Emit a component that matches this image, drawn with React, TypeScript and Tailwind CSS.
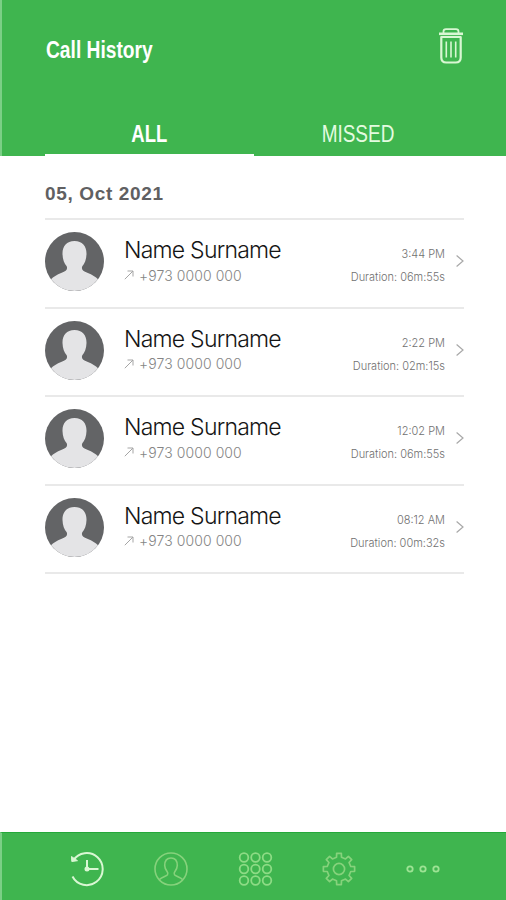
const calls = [
  { id: 1, name: "Name Surname", phone: "+973 0000 000", time: "3:44 PM", duration: "06m:55s" },
  { id: 2, name: "Name Surname", phone: "+973 0000 000", time: "2:22 PM", duration: "02m:15s" },
  { id: 3, name: "Name Surname", phone: "+973 0000 000", time: "12:02 PM", duration: "06m:55s" },
  { id: 4, name: "Name Surname", phone: "+973 0000 000", time: "08:12 AM", duration: "00m:32s" },
];

function TrashIcon() {
  return (
    <svg width="26" height="38" viewBox="0 0 26 38" fill="none" stroke="#d9f7d3">
      <path d="M5.500 6V4.600Q5.500 2.200 8 2.200h10q2.500 0 2.500 2.400V6" strokeWidth="1.800" />
      <path d="M1 6.800h24" strokeWidth="2.600" />
      <path d="M3.300 10h19.400v20.500q0 5-5 5H8.300q-5 0-5-5z" strokeWidth="2.200" strokeLinejoin="round" />
      <path d="M8.300 14.500v16M13 14.500v16M17.700 14.500v16" strokeWidth="1.600" />
    </svg>
  );
}

function Avatar() {
  return (
    <svg width="59" height="60" viewBox="0 0 59 60" className="shrink-0">
      <circle cx="29.5" cy="29.5" r="29.5" fill="#636466" />
      <path
        d="M29.500 9C21.500 9 17.300 14.500 17.500 22c.1 5.500 1.800 9.500 4.200 12.200 1.300 3.300-.7 4.800-5 6.600C11.500 43 8.300 45 6 47.300a29.500 29.500 0 0 0 47 0c-2.300-2.300-5.500-4.300-10.700-6.500-4.300-1.800-6.300-3.300-5-6.600C39.700 31.500 41.400 27.500 41.500 22 41.700 14.500 37.500 9 29.500 9z"
        fill="#e4e4e6"
      />
    </svg>
  );
}

function HistoryIcon() {
  return (
    <svg width="34" height="36" viewBox="0 0 34 36" fill="none" stroke="#d9f7d3">
      <path d="M3.200 9.500A16 16 0 1 1 2.500 25.500" strokeWidth="2" />
      <path d="M1.500 5.500l.3 5 5.700-.8z" fill="#d9f7d3" strokeWidth="1" />
      <path d="M17 9v9h11.500" strokeWidth="2" />
      <circle cx="17" cy="18" r="1.500" strokeWidth="2" />
    </svg>
  );
}

function ContactIcon() {
  return (
    <svg width="34" height="36" viewBox="0 0 34 36" fill="none" stroke="#86d27c" strokeWidth="1.600">
      <circle cx="17" cy="18" r="16" />
      <path d="M5.500 28.500c2.500-2.500 6.500-3 8-4.800.7-.9.5-1.800-.3-2.900-1.300-1.700-2.500-3.700-2.500-6.200C10.700 9.600 13.300 7 17 7s6.300 2.600 6.300 7.600c0 2.500-1.200 4.500-2.500 6.200-.8 1.100-1 2-.3 2.900 1.500 1.800 5.500 2.300 8 4.800" />
    </svg>
  );
}

function DialpadIcon() {
  const spots = [6, 17.500, 29];
  return (
    <svg width="35" height="36" viewBox="0 0 35 36" fill="none" stroke="#8ddb85" strokeWidth="1.800">
      {spots.map((y) => spots.map((x) => <circle key={`${x}-${y}`} cx={x} cy={y + 0.5} r="4.300" />))}
    </svg>
  );
}

// outline of a gear with eight teeth around (18, 18)
const gearPoints = Array.from({ length: 8 }, (_, i) =>
  [
    [-12, 12],
    [-8.5, 15.800],
    [8.5, 15.800],
    [12, 12],
  ].map(([deg, r]) => {
    const a = ((i * 45 + deg - 90) * Math.PI) / 180;
    return `${(18 + r * Math.cos(a)).toFixed(2)},${(18 + r * Math.sin(a)).toFixed(2)}`;
  }).join(" ")
).join(" ");

function GearIcon() {
  return (
    <svg width="36" height="36" viewBox="0 0 36 36" fill="none" stroke="#86d27c" strokeWidth="1.700" strokeLinejoin="round">
      <polygon points={gearPoints} />
      <circle cx="18" cy="18" r="5.600" />
    </svg>
  );
}

function MoreIcon() {
  return (
    <svg width="36" height="36" viewBox="0 0 36 36" fill="none" stroke="#9de394" strokeWidth="1.800">
      <circle cx="5" cy="18" r="2.700" />
      <circle cx="18" cy="18" r="2.700" />
      <circle cx="31" cy="18" r="2.700" />
    </svg>
  );
}

function CallRow({ call }: any) {
  return (
    <div className="flex h-[88.6px] border-b-2 border-[#e9e9e9] pt-[12px]">
      <Avatar />
      <div className="ml-[20px] pt-[4px] font-['Inter','Liberation_Sans',sans-serif]">
        <div className="h-[28px] whitespace-nowrap text-[23px] leading-[28px] font-light tracking-[-0.77px] text-[#151515]">
          {call.name}
        </div>
        <div className="flex h-[22px] items-center text-[14px] font-light text-[#858585]">
          <svg width="10" height="10" viewBox="0 0 10 10" fill="none" stroke="#a5a5a5" className="mr-[5px]">
            <path d="M.8 9.200L9 1M3.500 1H9v5.500" />
          </svg>
          <span className="whitespace-nowrap tracking-[0.08px]">{call.phone}</span>
        </div>
      </div>
      <div className="ml-auto pt-[13px] text-right font-['Inter','Liberation_Sans',sans-serif] text-[11px] font-light text-[#707070]">
        <div className="h-[23px] leading-[19px]">{call.time}</div>
        <div className="whitespace-nowrap leading-[19px]">Duration: {call.duration}</div>
      </div>
      <svg width="8" height="14" viewBox="0 0 8 14" fill="none" stroke="#a8a8a8" strokeWidth="1.200" className="mt-[22px] ml-[11px] shrink-0">
        <path d="M.6 1.500L7 7 .6 12.500" />
      </svg>
    </div>
  );
}

export default function App() {
  return (
    <div className="flex h-[900px] w-[506px] flex-col overflow-hidden bg-white font-['Liberation_Sans',Arial,sans-serif]">
      <header className="flex h-[156px] flex-col border-l-2 border-[#7bcf86] bg-[#3fb54f] text-white">
        <div className="flex justify-between pt-[27px] pr-[42px] pl-[44px]">
          <h1 className="mt-[7px] origin-left scale-x-[0.8] text-[24px] leading-[32px] font-bold">Call History</h1>
          <TrashIcon />
        </div>
        <nav className="mt-auto ml-[43px] flex h-[44px] text-center text-[24px] leading-[43px]">
          <div className="w-[209px] border-b-2 border-white">
            <span className="inline-block scale-x-[0.77] font-bold">ALL</span>
          </div>
          <div className="w-[208px] text-[#e4fbe0]">
            <span className="inline-block scale-x-[0.79]">MISSED</span>
          </div>
        </nav>
      </header>

      <main className="flex-1 pr-[42px] pl-[45px]">
        <h2 className="h-[64px] border-b-2 border-[#e9e9e9] pt-[26px] text-[19px] leading-[24px] font-bold tracking-[0.65px] text-[#606062]">
          05, Oct 2021
        </h2>
        {calls.map((call) => (
          <CallRow key={call.id} call={call} />
        ))}
      </main>

      <footer className="flex h-[68px] items-center border-t border-l-2 border-t-[#24a83a] border-l-[#7bcf86] bg-[#3fb54f] pt-[4px] pl-[43px]">
        <div className="flex w-[84px] justify-center"><HistoryIcon /></div>
        <div className="flex w-[84px] justify-center"><ContactIcon /></div>
        <div className="flex w-[84px] justify-center"><DialpadIcon /></div>
        <div className="flex w-[84px] justify-center"><GearIcon /></div>
        <div className="flex w-[84px] justify-center"><MoreIcon /></div>
      </footer>
    </div>
  );
}
